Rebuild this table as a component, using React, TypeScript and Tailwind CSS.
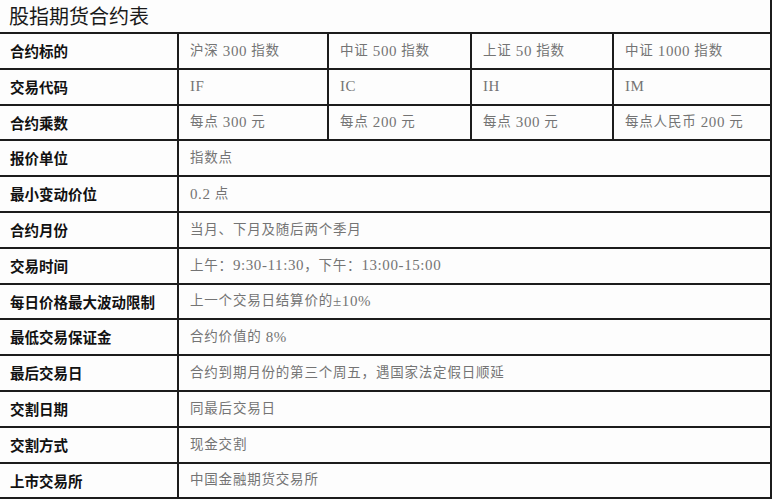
import React from "react";

const sans = { fontFamily: '"Noto Sans CJK SC", "Noto Sans", sans-serif' };
const serif = { fontFamily: '"Liberation Serif", "Noto Sans CJK SC", serif' };

const multiRows: { label: string; values: string[] }[] = [
  { label: "合约标的", values: ["沪深 300 指数", "中证 500 指数", "上证 50 指数", "中证 1000 指数"] },
  { label: "交易代码", values: ["IF", "IC", "IH", "IM"] },
  { label: "合约乘数", values: ["每点 300 元", "每点 200 元", "每点 300 元", "每点人民币 200 元"] },
];

const singleRows: { label: string; value: string }[] = [
  { label: "报价单位", value: "指数点" },
  { label: "最小变动价位", value: "0.2 点" },
  { label: "合约月份", value: "当月、下月及随后两个季月" },
  { label: "交易时间", value: "上午：9:30-11:30，下午：13:00-15:00" },
  { label: "每日价格最大波动限制", value: "上一个交易日结算价的±10%" },
  { label: "最低交易保证金", value: "合约价值的 8%" },
  { label: "最后交易日", value: "合约到期月份的第三个周五，遇国家法定假日顺延" },
  { label: "交割日期", value: "同最后交易日" },
  { label: "交割方式", value: "现金交割" },
  { label: "上市交易所", value: "中国金融期货交易所" },
];

// column widths incl. right border
const colW = ["w-[150px]", "w-[143px]", "w-[142px]"];

function Label({ text }: { text: string }) {
  return (
    <div className="w-[179px] shrink-0 border-r-2 border-[#1c1c1c] flex items-center pl-[10px] text-[14.5px] font-bold text-[#111]" style={sans}>
      {text}
    </div>
  );
}

// latin runs (digits, letters) are set a bit larger, like the original print
function Value({ text }: { text: string }) {
  const parts = text.split(/([0-9A-Za-z.:\-%±]+)/);
  return (
    <>
      {parts.map((p, i) =>
        /[0-9A-Za-z]/.test(p) ? (
          <span key={i} className="text-[15px] tracking-[0.6px]">{p}</span>
        ) : (
          <span key={i}>{p}</span>
        )
      )}
    </>
  );
}

export default function App() {
  return (
    <div className="w-[772px] h-[500px] bg-[#fdfdfd] overflow-hidden">
      <div className="border-r-2 border-[#1c1c1c]">
        <div className="h-[32px] flex items-center pl-[9px] text-[20px] text-[#1a1a1a]" style={sans}>
          股指期货合约表
        </div>
        <div className="border-t-2 border-[#1c1c1c]">
          {multiRows.map((r) => (
            <div key={r.label} className="flex h-[35.8px] border-b-2 border-[#1c1c1c]">
              <Label text={r.label} />
              {r.values.map((v, i) => (
                <div
                  key={i}
                  className={`${i < 3 ? colW[i] + " border-r-2 border-[#1c1c1c]" : "flex-1"} shrink-0 flex items-center pl-[11px] text-[13.5px] tracking-[0.8px] text-[#747474] whitespace-pre`}
                  style={serif}
                >
                  <Value text={v} />
                </div>
              ))}
            </div>
          ))}
          {singleRows.map((r) => (
            <div key={r.label} className="flex h-[35.8px] border-b-2 border-[#1c1c1c]">
              <Label text={r.label} />
              <div className="flex-1 flex items-center pl-[11px] text-[13.5px] tracking-[0.8px] text-[#747474] whitespace-pre" style={serif}>
                <Value text={r.value} />
              </div>
            </div>
          ))}
        </div>
      </div>
    </div>
  );
}
